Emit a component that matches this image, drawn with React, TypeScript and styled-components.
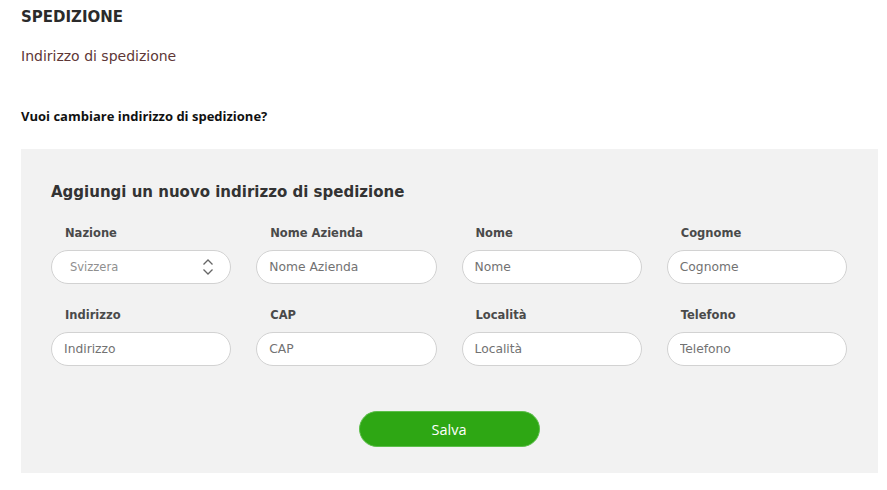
import React from 'react';
import styled, { createGlobalStyle } from 'styled-components';

const GlobalStyle = createGlobalStyle`
	body {
		margin: 0;
		background: #ffffff;
		font-family: 'DejaVu Sans', 'Noto Sans', sans-serif;
		color: #333333;
	}
`;

const Page = styled.main`
	padding: 7px 9px 18px 21px;
	display: flex;
	flex-direction: column;
`;

const Title = styled.h2`
	margin: 0;
	font-size: 15px;
	font-weight: 700;
	line-height: 20px;
	color: #2b2b2b;
`;

const Subtitle = styled.p`
	margin: 19px 0 0;
	font-size: 14px;
	line-height: 20px;
	color: #5e3737;
	font-weight: 400;
`;

const Question = styled.p`
	margin: 41px 0 0;
	font-family: 'Open Sans', sans-serif;
	font-size: 13px;
	font-weight: 700;
	line-height: 18px;
	color: #111111;
`;

const Panel = styled.section`
	margin-top: 24px;
	background: #f2f2f2;
	padding: 32px 31px 26px 30px;
	display: flex;
	flex-direction: column;
`;

const PanelTitle = styled.h3`
	margin: 0;
	font-size: 15px;
	font-weight: 700;
	line-height: 22px;
	color: #333333;
`;

const Grid = styled.div`
	margin-top: 21px;
	display: grid;
	grid-template-columns: repeat(4, 1fr);
	column-gap: 25px;
	row-gap: 22px;
`;

const Field = styled.label`
	display: flex;
	flex-direction: column;
	gap: 8px;
`;

const Label = styled.span`
	padding-left: 14px;
	font-size: 11.5px;
	font-weight: 700;
	line-height: 18px;
	color: #4a4a4a;
`;

const Input = styled.input`
	box-sizing: border-box;
	width: 100%;
	height: 34px;
	padding: 0 12px;
	border: 1px solid #d2d2d2;
	border-radius: 17px;
	background: #ffffff;
	font-family: inherit;
	font-size: 12.3px;
	font-weight: 400;
	color: #555555;
	outline: none;

	&::placeholder {
		color: #727272;
	}
`;

const SelectBox = styled.div`
	box-sizing: border-box;
	height: 34px;
	padding: 0 16px 0 18px;
	border: 1px solid #d2d2d2;
	border-radius: 17px;
	background: #ffffff;
	display: flex;
	align-items: center;
	justify-content: space-between;
	font-size: 11.5px;
	font-weight: 400;
	color: #8f8f8f;
`;

const ButtonRow = styled.div`
	margin-top: 45px;
	display: flex;
	justify-content: center;
`;

const SaveButton = styled.button`
	width: 181px;
	height: 36px;
	border: 1px solid #5cbf4a;
	border-radius: 18px;
	background: #2ea714;
	color: #ffffff;
	font-family: 'Open Sans', sans-serif;
	font-size: 14.5px;
	cursor: pointer;
`;

const Chevrons = () => (
	<svg width="12" height="18" viewBox="0 0 12 18" fill="none" stroke="#666" strokeWidth="1.3">
		<path d="M1.5 6.5 L6 2 L10.5 6.5" />
		<path d="M1.5 11.5 L6 16 L10.5 11.5" />
	</svg>
);

const fields = [
	{ label: 'Nome Azienda' },
	{ label: 'Nome' },
	{ label: 'Cognome' },
	{ label: 'Indirizzo' },
	{ label: 'CAP' },
	{ label: 'Località' },
	{ label: 'Telefono' },
];

export default function App() {
	return (
		<>
			<GlobalStyle />
			<Page>
				<Title>SPEDIZIONE</Title>
				<Subtitle>Indirizzo di spedizione</Subtitle>
				<Question>Vuoi cambiare indirizzo di spedizione?</Question>
				<Panel>
					<PanelTitle>Aggiungi un nuovo indirizzo di spedizione</PanelTitle>
					<Grid>
						<Field>
							<Label>Nazione</Label>
							<SelectBox>
								<span>Svizzera</span>
								<Chevrons />
							</SelectBox>
						</Field>
						{fields.map((f) => (
							<Field key={f.label}>
								<Label>{f.label}</Label>
								<Input placeholder={f.label} />
							</Field>
						))}
					</Grid>
					<ButtonRow>
						<SaveButton>Salva</SaveButton>
					</ButtonRow>
				</Panel>
			</Page>
		</>
	);
}
